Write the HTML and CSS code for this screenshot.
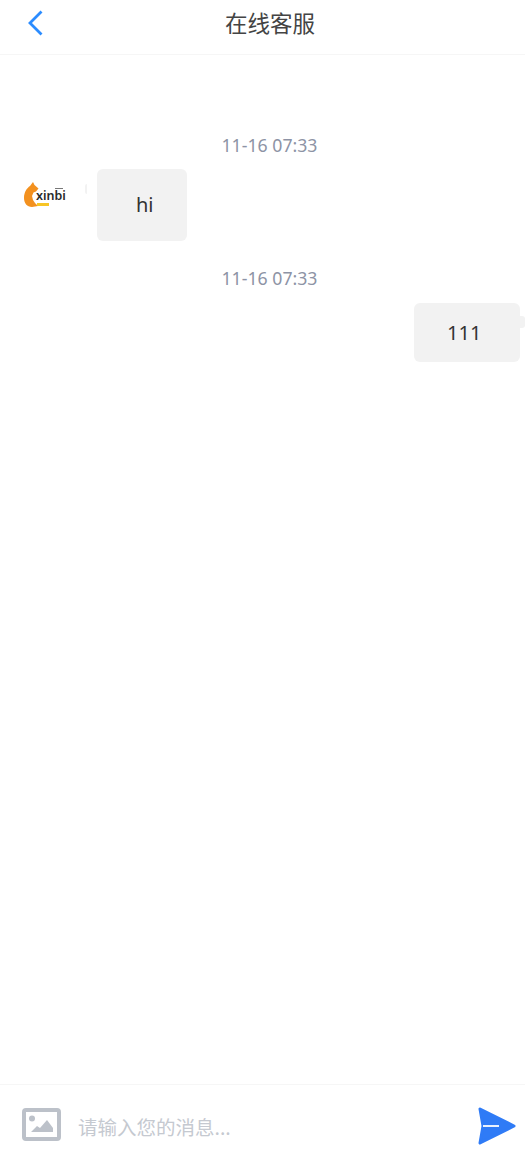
FILE: index.html
```html
<!DOCTYPE html>
<html lang="zh">
<head>
<meta charset="utf-8">
<title>在线客服</title>
<link rel="stylesheet" href="styles.css">
</head>
<body>
<div class="app">
  <header class="topbar">
    <svg class="back" width="16" height="26" viewBox="0 0 16 26"><path d="M14.500 1.500 3 13l11.500 11.500" fill="none" stroke="#2b8cff" stroke-width="2.800"/></svg>
    <h1 class="title">在线客服</h1>
  </header>
  <main class="messages">
    <div class="time time-first">11-16 07:33</div>
    <div class="row row-left">
      <div class="avatar">
        <svg class="fox" width="15" height="25" viewBox="0 0 15 25"><path d="M9 0l1.500 3L14.500 6.500 12 9.500 9.500 10.500 8 14l1 4 2 3 3 3-6 1C3 25 0 21 0 16 0 10 3 6 6 4Z" fill="#f3911f"/></svg>
        <span class="logo-text">xinbi</span>
        <span class="logo-mark"></span>
        <span class="logo-bar"></span>
      </div>
      <span class="tail-left"></span>
      <div class="bubble bubble-left">hi</div>
    </div>
    <div class="time time-second">11-16 07:33</div>
    <div class="row row-right">
      <div class="bubble bubble-right">111</div>
      <span class="tail-right"></span>
    </div>
  </main>
  <footer class="composer">
    <svg class="pic" width="39" height="33" viewBox="0 0 39 33"><rect x="2" y="2" width="35" height="29" rx="2" fill="none" stroke="#bcc1c9" stroke-width="4"/><circle cx="10" cy="10.500" r="3" fill="#bcc1c9"/><path d="M9 24l6-6 3 2 7-8 6 8v4Z" fill="#bcc1c9"/></svg>
    <div class="placeholder">请输入您的消息...</div>
    <svg class="send" width="40" height="40" viewBox="0 0 40 40"><path d="M3 3 37 20 3 37 6 20Z" fill="#2f7bf6" stroke="#2f7bf6" stroke-width="3" stroke-linejoin="round"/><path d="M6 20H22" stroke="#fff" stroke-width="1.800"/></svg>
  </footer>
</div>
</body>
</html>
```
FILE: styles.css
```css
* { box-sizing: border-box; }
html, body { margin: 0; height: 100%; background: #fff; }
body { font-family: "Noto Sans CJK SC", "Noto Sans", sans-serif; overflow: hidden; }
.app { height: 1164px; display: flex; flex-direction: column; }
.topbar { height: 55px; flex: none; position: relative; display: flex; align-items: center; justify-content: center; border-bottom: 1px solid #f6f6f6; }
.back { position: absolute; left: 27px; top: 10px; }
.title { margin: 0 0 11px 15px; font-size: 22.500px; font-weight: 400; line-height: 30px; color: #444; }
.messages { flex: 1; display: flex; flex-direction: column; }
.time { text-align: center; margin-left: 14px; font-family: "Noto Sans", sans-serif; font-size: 17.700px; line-height: 24px; color: #8d93a5; }
.time-first { margin-top: 78px; margin-bottom: 12px; }
.time-second { margin-top: 25px; margin-bottom: 13px; }
.row { display: flex; align-items: flex-start; }
.row-left { padding-left: 24px; }
.row-right { justify-content: flex-end; }
.avatar { position: relative; width: 42px; height: 30px; margin-top: 13px; }
.fox { position: absolute; left: 0; top: 0; }
.logo-text { position: absolute; left: 12px; top: 6px; font-family: "Noto Sans", sans-serif; font-size: 12.500px; font-weight: 600; line-height: 16px; color: #2a2a2a; }
.logo-mark { position: absolute; left: 31px; top: 6px; width: 8px; height: 1px; background: #777; }
.logo-bar { position: absolute; left: 13px; top: 21px; width: 12px; height: 3px; background: #f7c526; }
.tail-left { width: 2px; height: 10px; margin: 15px 10px 0 19px; border-radius: 2px 0 0 2px; background: #f2f2f2; }
.bubble { background: #f2f2f2; border-radius: 6px; font-family: "Noto Sans", sans-serif; font-size: 20px; color: #333; display: flex; align-items: center; }
.bubble-left { width: 90px; height: 72px; padding-left: 39px; padding-bottom: 2px; }
.bubble-right { width: 106px; height: 59px; padding-left: 33px; }
.tail-right { width: 5px; height: 12px; margin-top: 13px; border-radius: 0 3px 3px 0; background: #f2f2f2; }
.composer { height: 80px; flex: none; border-top: 1px solid #f6f6f6; display: flex; align-items: center; padding: 0 8px 0 22px; }
.pic { flex: none; }
.placeholder { flex: 1; margin: 4px 0 0 17px; font-size: 19.500px; line-height: 28px; color: #c5c9d0; }
.send { flex: none; margin-top: 3px; }
```
